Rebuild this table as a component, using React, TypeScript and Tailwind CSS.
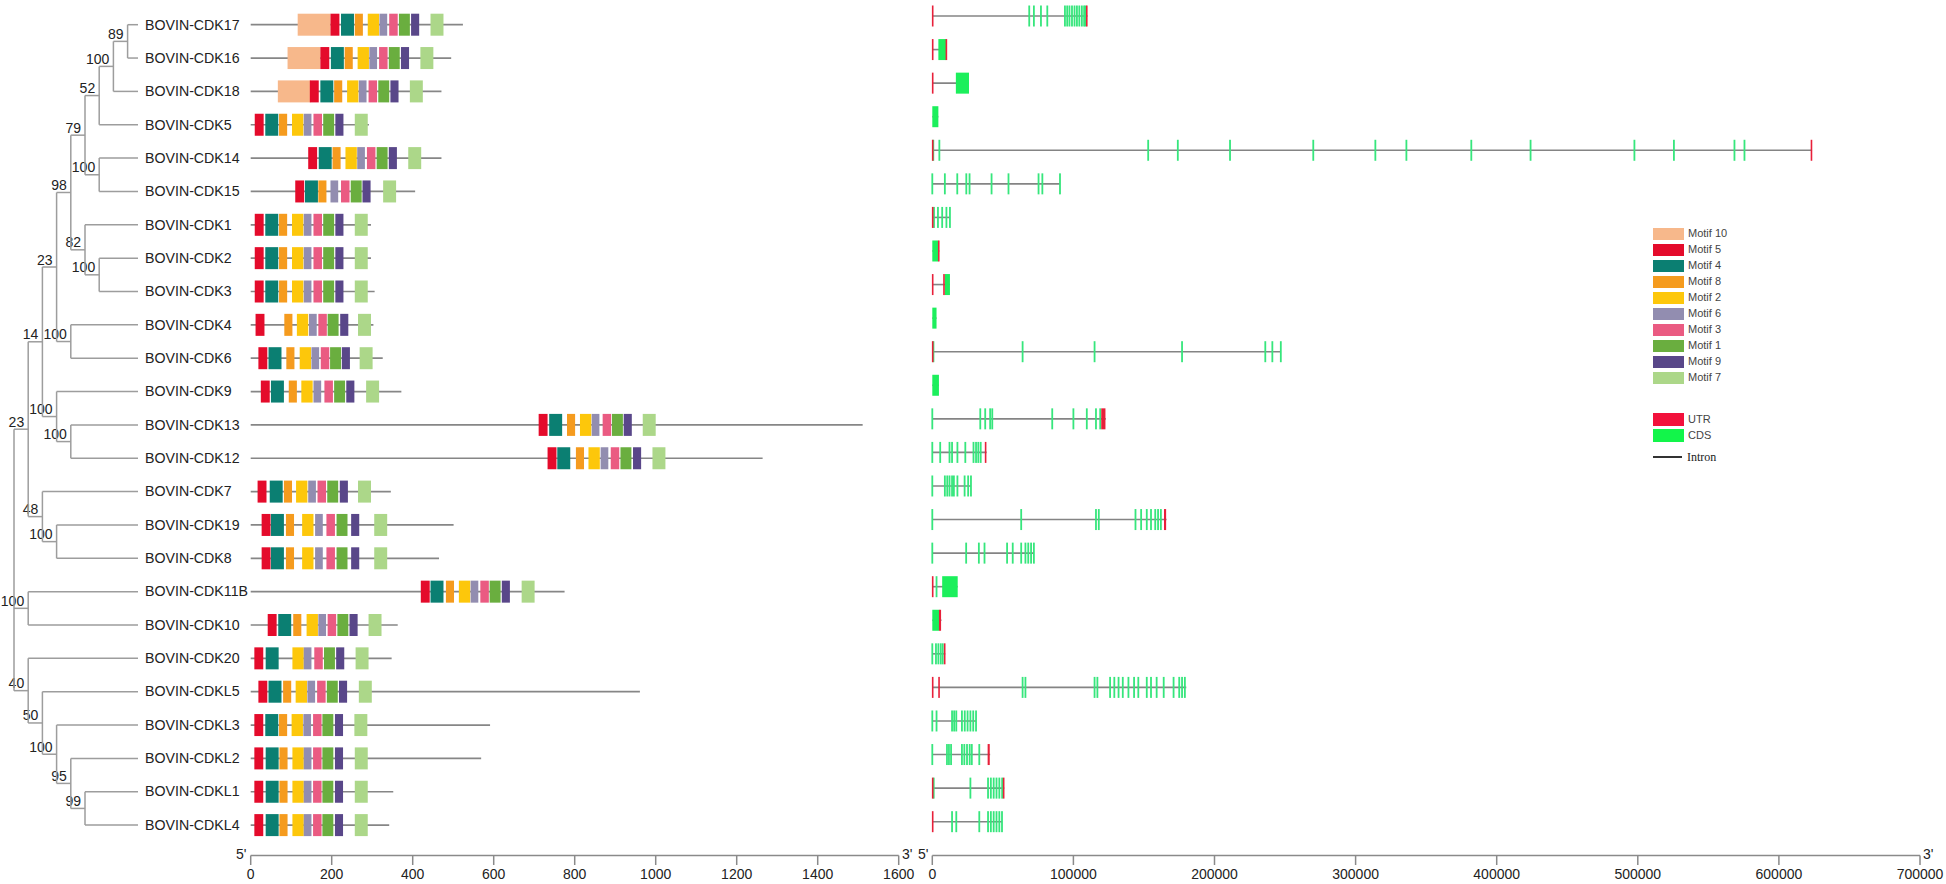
import React from "react"

const NAMES = [
  "BOVIN-CDK17", "BOVIN-CDK16", "BOVIN-CDK18", "BOVIN-CDK5", "BOVIN-CDK14", "BOVIN-CDK15",
  "BOVIN-CDK1", "BOVIN-CDK2", "BOVIN-CDK3", "BOVIN-CDK4", "BOVIN-CDK6", "BOVIN-CDK9",
  "BOVIN-CDK13", "BOVIN-CDK12", "BOVIN-CDK7", "BOVIN-CDK19", "BOVIN-CDK8", "BOVIN-CDK11B",
  "BOVIN-CDK10", "BOVIN-CDK20", "BOVIN-CDKL5", "BOVIN-CDKL3", "BOVIN-CDKL2", "BOVIN-CDKL1",
  "BOVIN-CDKL4",
]

const rowL = (i: number) => 24.7 + 33.35 * i
const rowR = (i: number) => 16 + 33.57 * i

// tree
type Node = { b?: string; c: (Node | number)[] }
const TREE: Node = {
  c: [
    {
      b: "23",
      c: [
        {
          b: "14",
          c: [
            {
              b: "23",
              c: [
                {
                  b: "98",
                  c: [
                    {
                      b: "79",
                      c: [
                        { b: "52", c: [{ b: "100", c: [{ b: "89", c: [0, 1] }, 2] }, 3] },
                        { b: "100", c: [4, 5] },
                      ],
                    },
                    { b: "82", c: [6, { b: "100", c: [7, 8] }] },
                  ],
                },
                { b: "100", c: [9, 10] },
              ],
            },
            { b: "100", c: [11, { b: "100", c: [12, 13] }] },
          ],
        },
        { b: "48", c: [14, { b: "100", c: [15, 16] }] },
      ],
    },
    { b: "100", c: [17, 18] },
    {
      b: "40",
      c: [19, { b: "50", c: [20, { b: "100", c: [21, { b: "95", c: [22, { b: "99", c: [23, 24] }] }] }] }],
    },
  ],
}

const nodeX = (d: number) => 14 + 14.2 * d

function drawTree(n: Node, d: number, out: React.ReactNode[]): number {
  const x = nodeX(d)
  const ys = n.c.map((ch) => {
    if (typeof ch === "number") {
      const y = rowL(ch)
      out.push(<line key={out.length} x1={x} x2={138} y1={y} y2={y} />)
      return y
    }
    const y = drawTree(ch, d + 1, out)
    out.push(<line key={out.length} x1={x} x2={nodeX(d + 1)} y1={y} y2={y} />)
    return y
  })
  const top = ys[0]
  const bot = ys[ys.length - 1]
  out.push(<line key={out.length} x1={x} x2={x} y1={top} y2={bot} />)
  const y = (top + bot) / 2
  if (n.b)
    out.push(
      <text key={out.length} x={x - 4} y={y - 2.5} textAnchor="end" stroke="none" fill="#222" fontSize={14}>
        {n.b}
      </text>
    )
  return y
}

// motifs
const MOTIF: Record<string, { fill: string; w: number }> = {
  m10: { fill: "#f7b88b", w: 81 },
  m5: { fill: "#e40b2b", w: 22 },
  m4: { fill: "#0b7f72", w: 32 },
  m8: { fill: "#f59b1e", w: 20 },
  m2: { fill: "#fdc70b", w: 28 },
  m6: { fill: "#928db0", w: 19 },
  m3: { fill: "#ea5b82", w: 21 },
  m1: { fill: "#6aae3f", w: 27 },
  m9: { fill: "#594789", w: 20 },
  m7: { fill: "#acd789", w: 32 },
}

const std = (s: number): [string, number][] => [
  ["m5", s], ["m4", s + 26], ["m8", s + 60], ["m2", s + 92], ["m6", s + 121],
  ["m3", s + 145], ["m1", s + 169], ["m9", s + 199], ["m7", s + 247],
]
const seq = (p: number[]): [string, number][] =>
  ["m5", "m4", "m8", "m2", "m6", "m3", "m1", "m9", "m7"].map((m, i) => [m, p[i]] as [string, number]).filter((e) => e[1] >= 0)

const PROT: { len: number; m: [string, number][] }[] = [
  { len: 524, m: [["m10", 116], ...std(197)] },
  { len: 495, m: [["m10", 91], ...std(172)] },
  { len: 471, m: [["m10", 67], ...std(146)] },
  { len: 292, m: std(10) },
  { len: 471, m: std(142) },
  { len: 406, m: seq([110, 134, 167, -1, 197, 223, 247, 276, 327]) },
  { len: 297, m: std(10) },
  { len: 297, m: std(10) },
  { len: 306, m: std(10) },
  { len: 303, m: seq([12, -1, 83, 114, 144, 167, 190, 221, 265]) },
  { len: 326, m: seq([19, 44, 88, 121, 150, 173, 196, 225, 269]) },
  { len: 372, m: seq([25, 50, 94, 125, 155, 182, 206, 236, 285]) },
  { len: 1511, m: seq([711, 737, 781, 813, 842, 869, 892, 921, 968]) },
  { len: 1264, m: seq([733, 757, 803, 834, 864, 889, 913, 944, 992]) },
  { len: 346, m: seq([17, 47, 82, 112, 142, 165, 189, 220, 265]) },
  { len: 501, m: seq([27, 50, 87, 127, 159, 187, 212, 248, 305]) },
  { len: 465, m: seq([27, 50, 87, 127, 159, 187, 212, 248, 305]) },
  { len: 775, m: seq([420, 444, 482, 514, 543, 567, 590, 620, 669]) },
  { len: 363, m: seq([42, 68, 105, 138, 167, 190, 214, 244, 291]) },
  { len: 348, m: seq([9, 37, -1, 103, 131, 157, 181, 211, 259]) },
  { len: 961, m: seq([19, 44, 80, 111, 140, 164, 188, 218, 267]) },
  { len: 591, m: seq([9, 36, 70, 101, 130, 154, 177, 208, 256]) },
  { len: 569, m: seq([9, 37, 71, 103, 131, 154, 177, 208, 257]) },
  { len: 352, m: seq([9, 37, 71, 103, 131, 154, 177, 208, 257]) },
  { len: 342, m: seq([9, 37, 71, 103, 131, 154, 177, 208, 257]) },
]

const MX = (aa: number) => 18.7 + aa * 0.405

// gene structures, positions in kb
type Gene = { end: number; c?: number[]; blk?: [number, number][]; u?: [number, number][] }
const GENES: Gene[] = [
  { end: 110, c: [68.7, 72, 77, 81.5, 94, 95.6, 97.2, 99, 100.8, 102.5, 104.2, 106, 107.6, 108.6], u: [[0, 0.7], [109.2, 110]] },
  { end: 10.4, blk: [[4.3, 9.7]], u: [[0, 0.7], [9.7, 10.4]] },
  { end: 26, blk: [[16.7, 26]], u: [[0, 0.7]] },
  { end: 4.3, blk: [[0, 4.3]] },
  { end: 623.5, c: [0.7, 5, 153, 174, 211, 270, 314, 336, 382, 424, 497.6, 525.6, 568.5, 575.6], u: [[0, 0.7], [622.8, 623.5]] },
  { end: 90.5, c: [0, 8.9, 17.7, 24.1, 26.4, 42, 54, 75.3, 78, 90.5] },
  { end: 12.5, c: [1.2, 4, 7, 10, 12.5], u: [[0, 0.7]] },
  { end: 5, blk: [[0, 4.3]], u: [[4.3, 5]] },
  { end: 12.5, blk: [[8.8, 12.5]], u: [[0, 0.7], [8, 8.8]] },
  { end: 3, blk: [[0, 3]] },
  { end: 247, c: [0.8, 64, 115, 177, 236, 241, 247], u: [[0, 0.7]] },
  { end: 4.7, blk: [[0, 4.7]] },
  { end: 123, c: [0, 34, 37.5, 41, 42.5, 85, 100, 109.5, 116, 119], u: [[120, 123]] },
  { end: 38.5, c: [0, 5.6, 12.2, 14, 17.8, 23.4, 29.2, 31, 32.6, 34.3], u: [[37.5, 38.5]] },
  { end: 27.4, c: [0, 8.9, 10.6, 12.2, 14, 15.3, 17.8, 22.9, 25.4, 27.4] },
  { end: 166, c: [0, 63, 116, 118, 144, 148, 152, 155, 158, 160, 162], u: [[164.5, 166]] },
  { end: 72, c: [0, 24, 33, 37, 53, 57, 63, 66, 68, 70, 72] },
  { end: 18, c: [3], blk: [[7, 18]], u: [[0, 0.8]] },
  { end: 6.5, blk: [[0, 5]], u: [[5, 6.5]] },
  { end: 9.2, c: [0, 2.6, 4.3, 6, 7.4], u: [[8.5, 9.2]] },
  { end: 180, c: [64, 66, 115, 117, 126, 129, 132, 135, 139, 143, 146, 152, 155, 159, 164, 171, 175, 177, 179], u: [[0, 0.7], [4.5, 5.2]] },
  { end: 31, c: [0, 3, 14, 15.5, 17, 21, 23, 25, 27, 29, 31] },
  { end: 41, c: [0, 10.4, 11.8, 13.3, 21, 22.7, 24.6, 26.5, 28, 33.3], u: [[39.5, 41]] },
  { end: 51, c: [1, 27, 39.5, 41.5, 43.5, 45.5, 47.5, 49.5], u: [[0, 0.7], [50.3, 51]] },
  { end: 49.4, c: [14, 17, 33.3, 39.5, 41.5, 43.5, 45.5, 47.5, 49.4], u: [[0, 0.7]] },
]

const GX = (kb: number) => 17.3 + kb * 1.411

const LEGEND = [
  { label: "Motif 10", cls: "bg-[#f7b88b]" },
  { label: "Motif 5", cls: "bg-[#e40b2b]" },
  { label: "Motif 4", cls: "bg-[#0b7f72]" },
  { label: "Motif 8", cls: "bg-[#f59b1e]" },
  { label: "Motif 2", cls: "bg-[#fdc70b]" },
  { label: "Motif 6", cls: "bg-[#928db0]" },
  { label: "Motif 3", cls: "bg-[#ea5b82]" },
  { label: "Motif 1", cls: "bg-[#6aae3f]" },
  { label: "Motif 9", cls: "bg-[#594789]" },
  { label: "Motif 7", cls: "bg-[#acd789]" },
]

const Tree = () => {
  const out: React.ReactNode[] = []
  drawTree(TREE, 0, out)
  return (
    <svg width={145} height={884} className="shrink-0 font-['Liberation_Sans',Arial,sans-serif]">
      <g stroke="#9d9d9d" strokeWidth={1.5}>{out}</g>
    </svg>
  )
}

const Names = () => (
  <div className="flex w-[87px] shrink-0 flex-col pt-[8px] font-['Liberation_Sans',Arial,sans-serif] text-[14.2px] leading-none text-[#222]">
    {NAMES.map((n) => (
      <div key={n} className="flex h-[33.35px] items-center whitespace-nowrap">
        {n}
      </div>
    ))}
  </div>
)

const MotifChart = () => (
  <svg width={683} height={884} className="shrink-0 overflow-visible font-['Liberation_Sans',Arial,sans-serif]">
    {PROT.map((p, i) => {
      const y = rowL(i)
      return (
        <g key={i}>
          <line x1={MX(0)} x2={MX(p.len)} y1={y} y2={y} stroke="#868686" strokeWidth={1.7} />
          {p.m.map(([k, s]) => (
            <rect key={k} x={MX(s)} y={y - 11} width={MOTIF[k].w * 0.405} height={22} fill={MOTIF[k].fill} />
          ))}
        </g>
      )
    })}
    <g stroke="#8a8a8a" strokeWidth={1.5}>
      <line x1={MX(0)} x2={MX(1600)} y1={855.5} y2={855.5} />
      {[0, 200, 400, 600, 800, 1000, 1200, 1400, 1600].map((v) => (
        <line key={v} x1={MX(v)} x2={MX(v)} y1={855.5} y2={865} />
      ))}
    </g>
    <g fill="#222" fontSize={14}>
      {[0, 200, 400, 600, 800, 1000, 1200, 1400, 1600].map((v) => (
        <text key={v} x={MX(v)} y={879} textAnchor="middle">
          {v}
        </text>
      ))}
      <text x={4} y={859}>5'</text>
      <text x={670} y={859}>3'</text>
    </g>
  </svg>
)

const GeneChart = () => (
  <svg width={1031} height={884} className="shrink-0 font-['Liberation_Sans',Arial,sans-serif]">
    {GENES.map((g, i) => {
      const y = rowR(i)
      return (
        <g key={i}>
          <line x1={GX(0)} x2={GX(g.end)} y1={y} y2={y} stroke="#848484" strokeWidth={1.6} />
          {(g.blk || []).map(([a, b], j) => (
            <rect key={"b" + j} x={GX(a)} y={y - 10.5} width={Math.max(1.8, GX(b) - GX(a))} height={21} fill="#1cef5c" />
          ))}
          {(g.c || []).map((k, j) => (
            <rect key={"c" + j} x={GX(k) - 0.9} y={y - 10.5} width={1.8} height={21} fill="#36e67c" />
          ))}
          {(g.u || []).map(([a, b], j) => (
            <rect key={"u" + j} x={GX(a) - 0.4} y={y - 10.5} width={Math.max(1.6, GX(b) - GX(a))} height={21} fill="#e8203a" />
          ))}
        </g>
      )
    })}
    <g stroke="#8a8a8a" strokeWidth={1.5}>
      <line x1={GX(0)} x2={GX(700)} y1={855.5} y2={855.5} />
      {[0, 100, 200, 300, 400, 500, 600, 700].map((v) => (
        <line key={v} x1={GX(v)} x2={GX(v)} y1={855.5} y2={865} />
      ))}
    </g>
    <g fill="#222" fontSize={14}>
      {[0, 100, 200, 300, 400, 500, 600, 700].map((v) => (
        <text key={v} x={GX(v)} y={879} textAnchor="middle">
          {v === 0 ? "0" : v * 1000}
        </text>
      ))}
      <text x={3} y={859}>5'</text>
      <text x={1008} y={859}>3'</text>
    </g>
  </svg>
)

const Legend = () => (
  <div className="absolute left-[1653px] top-[228px] flex flex-col font-['Liberation_Sans',Arial,sans-serif] text-[11px] leading-[11px] text-[#444]">
    {LEGEND.map((l) => (
      <div key={l.label} className="flex h-[16px] items-start gap-[4px]">
        <span className={`h-[12px] w-[31px] ${l.cls}`} />
        <span>{l.label}</span>
      </div>
    ))}
    <div className="mt-[25px] flex h-[16px] items-start gap-[4px]">
      <span className="h-[13px] w-[31px] bg-[#f2113b]" />
      <span className="pt-[1px]">UTR</span>
    </div>
    <div className="flex h-[16px] items-start gap-[4px]">
      <span className="h-[13px] w-[31px] bg-[#12f54a]" />
      <span className="pt-[1px]">CDS</span>
    </div>
    <div className="mt-[4px] flex h-[16px] items-center gap-[5px]">
      <span className="h-[1.5px] w-[29px] bg-[#333]" />
      <span className="font-['Liberation_Serif',serif] text-[12px] text-[#222]">Intron</span>
    </div>
  </div>
)

const App = () => {
  return (
    <div className="relative flex h-[884px] w-[1946px] overflow-hidden bg-white">
      <Tree />
      <Names />
      <MotifChart />
      <GeneChart />
      <Legend />
    </div>
  )
}

export default App
